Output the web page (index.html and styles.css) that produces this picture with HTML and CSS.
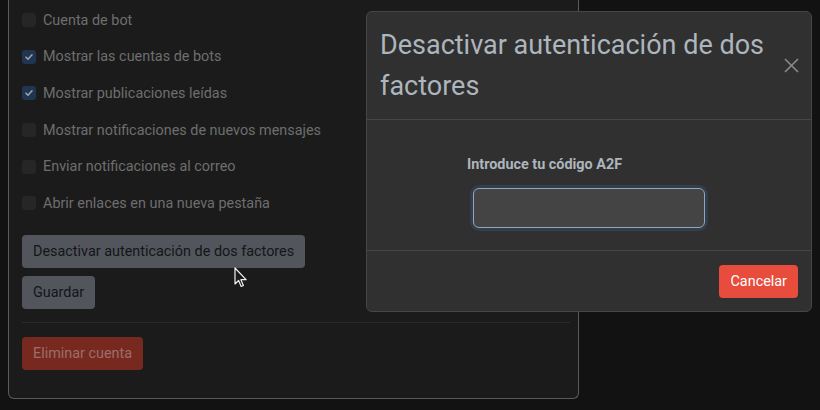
FILE: index.html
```html
<!DOCTYPE html>
<html lang="es">
<head>
<meta charset="utf-8">
<title>Ajustes</title>
<link rel="stylesheet" href="styles.css">
</head>
<body>
<div class="page">
  <div class="card">
    <div class="check-row"><span class="box"></span><span class="check-label">Cuenta de bot</span></div>
    <div class="check-row"><span class="box checked"><svg viewBox="0 0 14 14" width="14" height="14"><path d="M4 7.2l2 2 4-4.4" fill="none" stroke="#9aa3ad" stroke-width="1.6" stroke-linecap="round" stroke-linejoin="round"/></svg></span><span class="check-label">Mostrar las cuentas de bots</span></div>
    <div class="check-row"><span class="box checked"><svg viewBox="0 0 14 14" width="14" height="14"><path d="M4 7.2l2 2 4-4.4" fill="none" stroke="#9aa3ad" stroke-width="1.6" stroke-linecap="round" stroke-linejoin="round"/></svg></span><span class="check-label">Mostrar publicaciones leídas</span></div>
    <div class="check-row"><span class="box"></span><span class="check-label">Mostrar notificaciones de nuevos mensajes</span></div>
    <div class="check-row"><span class="box"></span><span class="check-label">Enviar notificaciones al correo</span></div>
    <div class="check-row"><span class="box"></span><span class="check-label">Abrir enlaces en una nueva pestaña</span></div>
    <div class="actions">
      <button class="btn btn-grey">Desactivar autenticación de dos factores</button>
      <button class="btn btn-grey">Guardar</button>
    </div>
    <hr class="sep">
    <button class="btn btn-danger-dim">Eliminar cuenta</button>
  </div>
</div>

<svg class="cursor" width="14" height="22" viewBox="0 0 14 22"><path d="M1 1v16l3.6-3.5 2.6 6 2.2-1-2.5-5.8h5.2z" fill="#1b1b1b" stroke="#f0f0f0" stroke-width="1.2" stroke-linejoin="round"/></svg>

<div class="modal">
  <div class="modal-header">
    <h2 class="modal-title">Desactivar autenticación de dos factores</h2>
    <svg class="close" width="15" height="15" viewBox="0 0 15 15"><path d="M1 1l13 13M14 1L1 14" stroke="#8a8a8a" stroke-width="1.6"/></svg>
  </div>
  <div class="modal-body">
    <div class="field">
      <label class="field-label">Introduce tu código A2F</label>
      <div class="input"></div>
    </div>
  </div>
  <div class="modal-footer">
    <button class="btn btn-danger">Cancelar</button>
  </div>
</div>
</body>
</html>
```

FILE: styles.css
```css
* { box-sizing: border-box; }
html, body { margin: 0; padding: 0; }
body {
  background: #121212;
  font-family: Roboto, "Liberation Sans", sans-serif;
  width: 820px;
  height: 410px;
  overflow: hidden;
  position: relative;
}
.page { padding-left: 8px; }
.card {
  width: 571px;
  height: 399px;
  background: #1b1b1b;
  border: 1px solid #5a5a5a;
  border-top: none;
  border-radius: 0 0 6px 6px;
  padding: 2px 13px 0 13px;
}
.check-row {
  height: 36.6px;
  display: flex;
  align-items: center;
}
.box {
  width: 14px;
  height: 14px;
  border-radius: 3px;
  background: #262626;
  margin-right: 7px;
  display: flex;
}
.box.checked { background: #1f3552; }
.check-label {
  color: #6e6e6e;
  font-size: 14.4px;
}
.actions {
  margin-top: 13px;
  display: flex;
  flex-direction: column;
  align-items: flex-start;
  gap: 8px;
}
.btn {
  font-family: Roboto, "Liberation Sans", sans-serif;
  font-size: 14.4px;
  height: 33px;
  padding: 0 11px;
  border: none;
  border-radius: 4px;
  cursor: default;
}
.btn-grey { background: #52565c; color: #141518; }
.sep {
  border: none;
  border-top: 1px solid #2a2a2a;
  margin: 13px 0 14px 0;
  width: 548px;
}
.btn-danger-dim { background: #772920; color: #9b6e6a; }
.cursor {
  position: absolute;
  left: 234px;
  top: 267px;
}
.modal {
  position: absolute;
  left: 366px;
  top: 11px;
  width: 446px;
  height: 301px;
  background: #303030;
  border: 1px solid #464646;
  border-radius: 6px;
  display: flex;
  flex-direction: column;
}
.modal-header {
  height: 108px;
  border-bottom: 1px solid #464646;
  display: flex;
  align-items: center;
  justify-content: space-between;
  padding: 0 12px 0 13px;
}
.modal-title {
  margin: 0;
  font-weight: 400;
  font-size: 27px;
  line-height: 41px;
  color: #adb5bd;
  width: 400px;
}
.close { flex: none; }
.modal-body {
  height: 131px;
  border-bottom: 1px solid #464646;
  display: flex;
  justify-content: center;
  padding-top: 37px;
}
.field { width: 244px; }
.field-label {
  display: block;
  color: #adb5bd;
  font-weight: 700;
  font-size: 14.4px;
  line-height: 16px;
}
.input {
  margin: 15px 6px 0 6px;
  height: 40px;
  background: #444444;
  border: 1px solid #94a6bb;
  border-radius: 6px;
  box-shadow: 0 0 0 3px rgba(55, 90, 127, 0.35);
}
.modal-footer {
  flex: 1;
  display: flex;
  justify-content: flex-end;
  align-items: center;
  padding: 0 13px;
}
.btn-danger { background: #e74c3c; color: #ffffff; padding: 0 11px; }
```
